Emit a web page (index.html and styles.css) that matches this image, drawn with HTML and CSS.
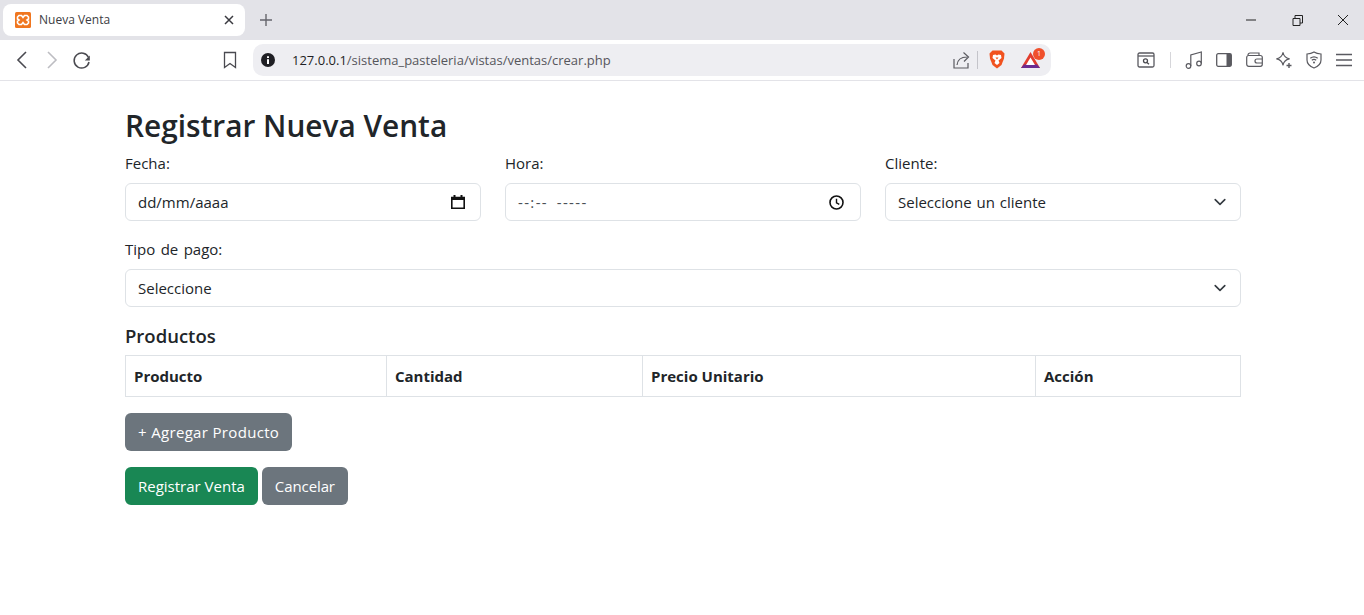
FILE: index.html
```html
<!DOCTYPE html>
<html>
    <head>
        <meta charset="utf-8">
        <title>Nueva Venta</title>
        <link rel="stylesheet" href="styles.css">
    </head>
    <body>
        <div class="tabstrip">
            <div class="tab">
                <svg class="favicon" width="16" height="16" viewBox="0 0 16 16">
                    <rect width="16" height="16" rx="1.5" fill="#f0761f"/>
                    <path d="M4 3.5h2.5l1.5 2 1.5-2H12l1.5 1.5v2L12 8l1.5 1v2L12 12.500H9.500L8 10.500l-1.500 2H4L2.500 11V9L4 8 2.500 7V5z" fill="none" stroke="#fff" stroke-width="1.600"/>
                </svg>
                <span class="tab-title">Nueva Venta</span>
                <svg class="tab-close" width="10" height="10" viewBox="0 0 10 10">
                    <path d="M1 1l8 8M9 1L1 9" stroke="#3a3a40" stroke-width="1.500"/>
                </svg>
            </div>
            <svg class="new-tab" width="12" height="12" viewBox="0 0 12 12">
                <path d="M6 0v12M0 6h12" stroke="#66666c" stroke-width="1.400"/>
            </svg>
            <div class="window-btns">
                <svg width="46" height="40" viewBox="0 0 46 40"><path d="M18 20h10" stroke="#222" stroke-width="1"/></svg>
                <svg width="46" height="40" viewBox="0 0 46 40"><path d="M19 18.500h7v7h-7zM21 18v-2.500h7.500V23H26" fill="none" stroke="#222" stroke-width="1"/></svg>
                <svg width="46" height="40" viewBox="0 0 46 40"><path d="M18 15l10 10M28 15L18 25" stroke="#222" stroke-width="1"/></svg>
            </div>
        </div>
        <div class="toolbar">
            <span class="ico">
                <svg width="20" height="20" viewBox="0 0 20 20"><path d="M14 2l-8 8 8 8" fill="none" stroke="#4a4a50" stroke-width="1.600"/></svg>
            </span>
            <span class="ico">
                <svg width="20" height="20" viewBox="0 0 20 20"><path d="M6 2l8 8-8 8" fill="none" stroke="#bdbdc2" stroke-width="1.600"/></svg>
            </span>
            <span class="ico">
                <svg width="20" height="20" viewBox="0 0 20 20"><path d="M16.500 7.500A7.500 7.500 0 1 0 17 12" fill="none" stroke="#4a4a50" stroke-width="1.500"/><path d="M17.800 5.500v5h-5z" fill="#4a4a50"/></svg>
            </span>
            <span class="ico bookmark">
                <svg width="20" height="20" viewBox="0 0 20 20"><path d="M4.500 2.500h11v15L10 13.500l-5.500 4z" fill="none" stroke="#4a4a50" stroke-width="1.300"/></svg>
            </span>
            <div class="urlbar">
                <svg class="info" width="14" height="14" viewBox="0 0 14 14">
                    <circle cx="7" cy="7" r="7" fill="#1f1f24"/>
                    <path d="M6 3.200h2v1.800H6zM6 6.200h2v4.800H6z" fill="#fff"/>
                </svg>
                <span class="url"><span class="url-host">127.0.0.1</span>/sistema_pasteleria/vistas/ventas/crear.php</span>
                <svg class="share" width="18" height="18" viewBox="0 0 18 18">
                    <path d="M1 8v9h14v-5" fill="none" stroke="#5a5a60" stroke-width="1.200"/>
                    <path d="M4 14c.5-5 4-8 10-8M10.500 1.500L15.500 6l-4.500 4.500" fill="none" stroke="#5a5a60" stroke-width="1.200"/>
                </svg>
                <span class="url-sep"></span>
                <svg class="brave" width="16" height="19" viewBox="0 0 16 19">
                    <path d="M3.500 0.500h9L15.500 3.500 15 8.500 12.500 15 8 18.500 3.500 15 1 8.500 0.500 3.500z" fill="#f1521f"/>
                    <path d="M4 5l2.500-.5L8 5.500l1.500-1L12 5l.5 3-3 2.500 1 2.500L8 15l-2.500-2 1-2.500-3-2.500z" fill="#fff"/>
                    <path d="M6.500 7.500h3L8 9.500z" fill="#f1521f"/>
                </svg>
                <div class="bat">
                    <svg width="19" height="16" viewBox="0 0 19 16">
                        <path d="M9.500 0L19 16H0z" fill="#e23d2e"/>
                        <path d="M3 12.500h13L19 16H0z" fill="#6b2c91"/>
                        <path d="M9.500 5.500l4.500 7.500H5z" fill="#fff"/>
                    </svg>
                    <span class="badge">1</span>
                </div>
            </div>
            <span class="ico tools-first">
                <svg width="18" height="16" viewBox="0 0 18 16">
                    <rect x="1" y="1" width="16" height="14" rx="1.500" fill="none" stroke="#5a5a60" stroke-width="1.300"/>
                    <path d="M1 4h16" stroke="#5a5a60" stroke-width="1.300"/>
                    <circle cx="8.500" cy="8.800" r="2" fill="none" stroke="#4a4a50" stroke-width="1.300"/>
                    <path d="M10 10.500l2 1.800" stroke="#4a4a50" stroke-width="1.300"/>
                </svg>
            </span>
            <span class="tools-sep"></span>
            <span class="ico">
                <svg width="18" height="18" viewBox="0 0 18 18">
                    <circle cx="3.500" cy="15" r="2.300" fill="none" stroke="#5a5a60" stroke-width="1.200"/>
                    <circle cx="14" cy="12.500" r="2.300" fill="none" stroke="#5a5a60" stroke-width="1.200"/>
                    <path d="M5.800 15V4L16.300 1v11.500" fill="none" stroke="#5a5a60" stroke-width="1.200"/>
                </svg>
            </span>
            <span class="ico">
                <svg width="16" height="14" viewBox="0 0 16 14">
                    <rect x=".7" y=".7" width="14.600" height="12.600" rx="1.500" fill="none" stroke="#5a5a60" stroke-width="1.300"/>
                    <path d="M10.500 .7h3.500a1.300 1.300 0 0 1 1.300 1.300v10a1.300 1.300 0 0 1-1.300 1.300h-3.500z" fill="#5a5a60"/>
                </svg>
            </span>
            <span class="ico">
                <svg width="17" height="15" viewBox="0 0 17 15">
                    <path d="M2 3.500V3a2 2 0 0 1 2-2h9v2.500" fill="none" stroke="#5a5a60" stroke-width="1.200"/>
                    <rect x=".7" y="3.500" width="15.600" height="10.800" rx="2" fill="none" stroke="#5a5a60" stroke-width="1.200"/>
                    <path d="M16 7h-5a1.500 1.500 0 0 0 0 4h5" fill="none" stroke="#5a5a60" stroke-width="1.200"/>
                </svg>
            </span>
            <span class="ico">
                <svg width="18" height="18" viewBox="0 0 18 18">
                    <path d="M8 1.500c.8 3.800 2.500 5.500 6.300 6.300C10.500 8.600 8.800 10.300 8 14c-.8-3.700-2.500-5.400-6.300-6.200C5.500 7 7.200 5.300 8 1.500z" fill="none" stroke="#5a5a60" stroke-width="1.200" stroke-linejoin="round"/>
                    <path d="M14 12v5M11.500 14.500h5" stroke="#5a5a60" stroke-width="1.400"/>
                </svg>
            </span>
            <span class="ico">
                <svg width="16" height="18" viewBox="0 0 16 18">
                    <path d="M8 1c2 1.300 4.300 1.900 7 2v6c0 4-3 6.500-7 8-4-1.500-7-4-7-8V3c2.700-.1 5-.7 7-2z" fill="none" stroke="#5a5a60" stroke-width="1.200"/>
                    <path d="M4.300 7.300c2.200-1.800 5.200-1.800 7.400 0M5.800 9.300c1.300-1 3.100-1 4.400 0" fill="none" stroke="#5a5a60" stroke-width="1.200"/>
                    <circle cx="8" cy="11.500" r="1" fill="#5a5a60"/>
                </svg>
            </span>
            <span class="ico">
                <svg width="16" height="14" viewBox="0 0 16 14">
                    <path d="M0 1.500h16M0 7h16M0 12.500h16" stroke="#5a5a60" stroke-width="1.400"/>
                </svg>
            </span>
        </div>

        <div class="container">
            <h2 class="page-title">Registrar Nueva Venta</h2>
            <form>
                <div class="row">
                    <div class="col">
                        <label class="form-label">Fecha:</label>
                        <div class="form-control">
                            <span>dd/mm/aaaa</span>
                            <svg class="picker-date" width="14" height="14" viewBox="0 0 14 14">
                                <path d="M.8 2.500h12.400v10.700H.8z" fill="none" stroke="#111" stroke-width="1.600"/>
                                <path d="M0 2h14v3H0zM2.500 0h2v2h-2zM9.500 0h2v2h-2z" fill="#111"/>
                            </svg>
                        </div>
                    </div>
                    <div class="col">
                        <label class="form-label">Hora:</label>
                        <div class="form-control">
                            <span class="time-mask">--:-- -----</span>
                            <svg class="picker-time" width="15" height="15" viewBox="0 0 15 15">
                                <circle cx="7.500" cy="7.500" r="6.500" fill="none" stroke="#111" stroke-width="1.600"/>
                                <path d="M7.500 3.800v4l2.800 1.600" fill="none" stroke="#111" stroke-width="1.400"/>
                            </svg>
                        </div>
                    </div>
                    <div class="col">
                        <label class="form-label">Cliente:</label>
                        <div class="form-control">
                            <span>Seleccione un cliente</span>
                            <svg width="16" height="16" viewBox="0 0 16 16"><path d="M2 5l6 6 6-6" fill="none" stroke="#343a40" stroke-width="2" stroke-linecap="round" stroke-linejoin="round" transform="translate(1.600 1.600) scale(.8)"/></svg>
                        </div>
                    </div>
                </div>
                <div class="group">
                    <label class="form-label">Tipo de pago:</label>
                    <div class="form-control">
                        <span>Seleccione</span>
                        <svg width="16" height="16" viewBox="0 0 16 16"><path d="M2 5l6 6 6-6" fill="none" stroke="#343a40" stroke-width="2" stroke-linecap="round" stroke-linejoin="round" transform="translate(1.600 1.600) scale(.8)"/></svg>
                    </div>
                </div>
                <h5 class="section-title">Productos</h5>
                <table class="table">
                    <thead>
                        <tr>
                            <th class="c-prod">Producto</th>
                            <th class="c-cant">Cantidad</th>
                            <th class="c-prec">Precio Unitario</th>
                            <th>Acción</th>
                        </tr>
                    </thead>
                </table>
                <div class="group">
                    <button type="button" class="btn btn-secondary btn-add">+ Agregar Producto</button>
                </div>
                <div class="actions">
                    <button type="button" class="btn btn-success">Registrar Venta</button>
                    <button type="button" class="btn btn-secondary btn-cancel">Cancelar</button>
                </div>
            </form>
        </div>
    </body>
</html>
```

FILE: styles.css
```css
* {
    box-sizing: border-box;
}
body {
    margin: 0;
    font-family: "Open Sans", "Noto Sans", sans-serif;
    font-size: 16px;
    line-height: 24px;
    color: #212529;
    background-color: #fff;
}
svg {
    display: block;
    flex: none;
}

/* browser chrome */
.tabstrip {
    display: flex;
    align-items: center;
    height: 40px;
    padding-left: 3px;
    background-color: #e3e3e8;
}
.tab {
    display: flex;
    align-items: center;
    width: 242px;
    height: 32px;
    padding: 0 11px 0 12px;
    border-radius: 8px;
    background-color: #fff;
}
.tab-title {
    flex: 1;
    margin-left: 8px;
    font-size: 12px;
    color: #3c3c43;
}
.new-tab {
    margin-left: 15px;
}
.window-btns {
    display: flex;
    margin-left: auto;
    margin-right: -2px;
}
.toolbar {
    display: flex;
    align-items: center;
    height: 41px;
    padding: 0 3px 1px 7px;
    border-bottom: 1px solid #e3e3e8;
}
.ico {
    display: flex;
    align-items: center;
    justify-content: center;
    width: 30px;
    height: 30px;
    flex: none;
}
.bookmark {
    margin-left: 118px;
}
.urlbar {
    display: flex;
    align-items: center;
    width: 798px;
    height: 32px;
    margin-left: 8px;
    padding-left: 8px;
    border-radius: 10px;
    background-color: #eeeef2;
}
.url {
    margin-left: 17px;
    font-size: 13px;
    color: #56565c;
}
.url-host {
    color: #1f1f24;
}
.share {
    margin-left: auto;
}
.url-sep {
    width: 1px;
    height: 18px;
    margin: 0 11px 0 6px;
    background-color: #c4c4ca;
}
.bat {
    position: relative;
    margin: 0 11px 0 16px;
}
.badge {
    position: absolute;
    top: -4px;
    right: -5px;
    width: 12px;
    height: 12px;
    border-radius: 50%;
    background-color: #f0502c;
    color: #fff;
    font-size: 7px;
    line-height: 12px;
    text-align: center;
}
.tools-first {
    margin-left: 80px;
}
.tools-sep {
    width: 1px;
    height: 16px;
    margin: 0 8px 0 9px;
    background-color: #d6d6da;
}

/* page */
.container {
    width: 1116px;
    margin-left: 125px;
    padding-top: 26px;
}
.page-title {
    margin: 0 0 6px;
    font-size: 29.8px;
    font-weight: 600;
    line-height: 38px;
}
.row {
    display: flex;
    gap: 24px;
}
.col {
    flex: 1;
    margin-bottom: 16px;
}
.group {
    margin-bottom: 16px;
}
.form-label {
    display: block;
    margin-bottom: 8px;
    font-size: 15px;
    word-spacing: 1.5px;
}
.form-control {
    display: flex;
    align-items: center;
    justify-content: space-between;
    height: 38px;
    padding: 0 12px;
    border: 1px solid #dee2e6;
    border-radius: 6px;
    font-size: 15px;
    word-spacing: 1px;
}
.time-mask {
    color: #4a4f55;
    letter-spacing: 1.35px;
    word-spacing: 3.5px;
}
.picker-date {
    margin-right: 3px;
}
.picker-time {
    margin-right: 4px;
}
.section-title {
    margin: 0 0 7px;
    padding-top: 1px;
    font-size: 18.5px;
    font-weight: 600;
    line-height: 24px;
}
.table {
    width: 100%;
    margin-bottom: 16px;
    border-collapse: collapse;
    table-layout: fixed;
}
.table th {
    height: 41px;
    padding: 8px;
    border: 1px solid #dee2e6;
    font-size: 15px;
    font-weight: 700;
    text-align: left;
}
.c-prod {
    width: 261px;
}
.c-cant {
    width: 256px;
}
.c-prec {
    width: 393px;
}
.btn {
    height: 38px;
    padding: 0 12px;
    border: 1px solid transparent;
    border-radius: 6px;
    color: #fff;
    font-family: inherit;
    font-size: 15px;
}
.btn-add {
    letter-spacing: .33px;
}
.btn-cancel {
    letter-spacing: -.1px;
}
.btn-secondary {
    background-color: #6c757d;
}
.btn-success {
    background-color: #198754;
}
.actions {
    display: flex;
    gap: 4px;
}
```
